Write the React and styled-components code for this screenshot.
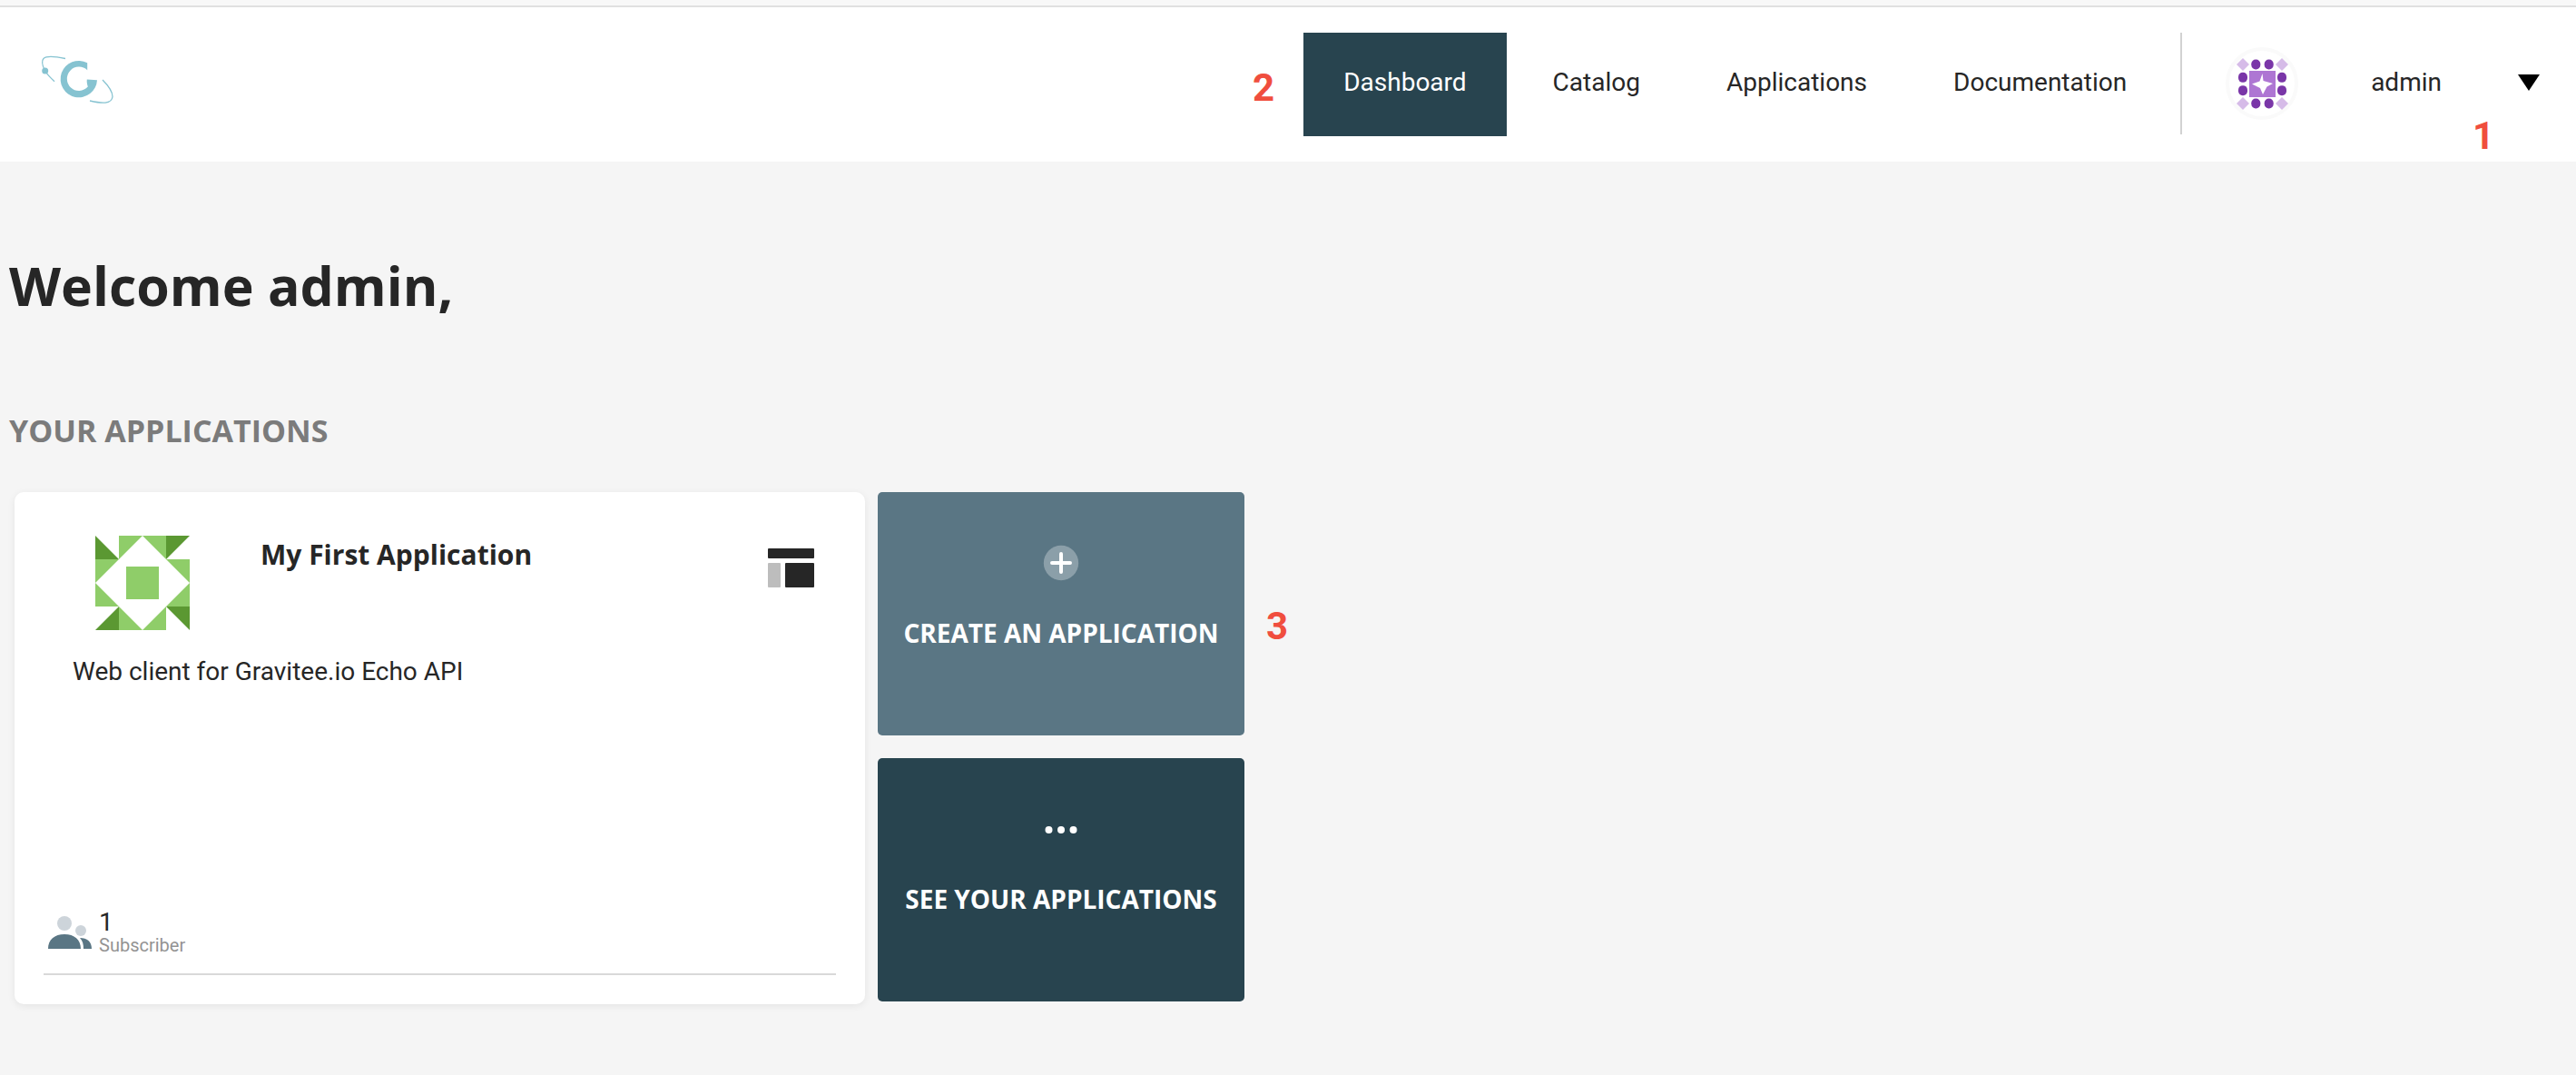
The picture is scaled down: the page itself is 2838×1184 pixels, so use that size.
import React from "react";
import styled, { createGlobalStyle } from "styled-components";

const GlobalStyle = createGlobalStyle`
  *, *::before, *::after { box-sizing: border-box; }
  html, body { margin: 0; background: #f5f5f5; }
  body, button {
    font-family: Roboto, "Noto Sans", sans-serif;
    color: #262626;
  }
  h1, h2, h3, p { margin: 0; }
  svg { display: block; flex: none; }
`;

const headingFont = `"Open Sans", "Noto Sans", sans-serif`;

const Page = styled.div`
  min-height: 100vh;
  background: #f5f5f5;
`;

const TopStrip = styled.div`
  height: 8px;
  background: #f8f8f8;
  border-bottom: 2px solid #e0e0e0;
`;

const Header = styled.header`
  display: flex;
  align-items: center;
  height: 170px;
  padding: 0 40px;
  background: #ffffff;
`;

const LogoLink = styled.a`
  margin: 0 auto 12px 0;
`;

const Marker = styled.span`
  font-size: 42px;
  font-weight: 700;
  line-height: 48px;
  color: #f04e3e;
`;

const NavMarker = styled(Marker)`
  margin: 8px 32px 0 0;
`;

const UserMarker = styled(Marker)`
  position: absolute;
  top: 90px;
  right: 50px;
`;

const TileMarker = styled(Marker)`
  position: absolute;
  top: 124px;
  left: calc(100% + 24px);
`;

const Nav = styled.nav`
  display: flex;
  gap: 7px;
`;

const NavLink = styled.a`
  padding: 39px 44px 43px;
  font-size: 28px;
  line-height: 32px;
  text-decoration: none;
  color: ${(p) => (p.$active ? "#ffffff" : "#262626")};
  background: ${(p) => (p.$active ? "#28444f" : "transparent")};
`;

const UserArea = styled.div`
  position: relative;
  display: flex;
  align-items: center;
  height: 112px;
  margin: 0 0 2px 15px;
  padding-left: 48px;
  border-left: 2px solid #d2d2d2;
`;

const Avatar = styled.span`
  display: grid;
  place-items: center;
  width: 80px;
  height: 80px;
  border: 4px solid #fafafa;
  border-radius: 50%;
`;

const UserButton = styled.button`
  display: flex;
  align-items: center;
  gap: 84px;
  margin-left: 80px;
  padding: 0 0 2px;
  border: 0;
  background: none;
  font-size: 28px;
  line-height: 32px;
`;

const Main = styled.main`
  padding: 98px 10px 76px;
`;

const Title = styled.h1`
  font-family: ${headingFont};
  font-size: 59px;
  font-weight: 700;
  line-height: 76px;
`;

const SectionTitle = styled.h2`
  margin-top: 102px;
  font-family: ${headingFont};
  font-size: 34px;
  font-weight: 700;
  line-height: 40px;
  text-transform: uppercase;
  color: #7b7b7b;
`;

const Applications = styled.section`
  display: flex;
  align-items: flex-start;
  gap: 14px;
  margin-top: 48px;
  padding-left: 6px;
`;

const Card = styled.article`
  display: flex;
  flex-direction: column;
  width: 937px;
  min-height: 564px;
  padding: 48px 32px 32px;
  border-radius: 10px;
  background: #ffffff;
  box-shadow: 0 2px 8px rgba(0, 0, 0, 0.07);
`;

const CardHead = styled.div`
  display: flex;
  align-items: flex-start;
  padding: 0 24px 0 57px;
`;

const CardTitle = styled.h3`
  flex: 1;
  margin: 2px 0 0 78px;
  font-family: ${headingFont};
  font-size: 30px;
  font-weight: 700;
  line-height: 38px;
`;

const IconSlot = styled.span`
  padding-top: 14px;
`;

const Description = styled.p`
  margin: 30px 32px 0;
  font-size: 28px;
  line-height: 32px;
`;

const Stats = styled.div`
  display: flex;
  align-items: center;
  gap: 7px;
  margin-top: auto;
  padding: 0 5px 20px;
  border-bottom: 2px solid #d9d9d9;
`;

const StatText = styled.div`
  display: flex;
  flex-direction: column;
`;

const StatValue = styled.span`
  font-size: 28px;
  line-height: 28px;
`;

const StatLabel = styled.span`
  font-size: 20px;
  line-height: 22px;
  color: #939393;
`;

const Tiles = styled.div`
  display: flex;
  flex-direction: column;
  gap: 25px;
`;

const TileWrap = styled.div`
  position: relative;
`;

const Tile = styled.button`
  display: flex;
  flex-direction: column;
  align-items: center;
  gap: 41px;
  width: 404px;
  height: 268px;
  padding: 58px 12px 0;
  border: 0;
  border-radius: 5px;
  background: ${(p) => (p.$dark ? "#28444f" : "#5a7684")};
  color: #ffffff;
  font-family: ${headingFont};
  font-size: 28px;
  font-weight: 700;
  line-height: 32px;
  text-transform: uppercase;
  white-space: nowrap;
`;

const navItems = ["Dashboard", "Catalog", "Applications", "Documentation"];

const Logo = () => (
  <svg width="90" height="64" viewBox="40 55 90 64" fill="none" aria-hidden="true">
    <path
      d="M96.2 69.2A20.2 20.2 0 1 0 107 88.2L95.8 87.6C95.4 90.5 96 93 96.8 95.6A13.2 13.2 0 1 1 96.2 77.2Z"
      fill="#86c3d1"
    />
    <path
      d="M72 64.5C60 62 51 61.500 48 64.5C45.500 67 46.500 72 49.500 78C52 82 56 86 60 89.700M113 88C120 95 124 102 124 106.500C123 115 112 114 99 111"
      stroke="#86c3d1"
      strokeWidth="1.3"
    />
    <circle cx="49.7" cy="78" r="3.500" fill="#86c3d1" />
  </svg>
);

const diamonds = [[7, 7], [50, 7], [7, 50], [50, 50]];
const dots = [
  [21.300, 7], [35.700, 7], [21.300, 50], [35.700, 50],
  [7, 21.300], [7, 35.700], [50, 21.300], [50, 35.700],
];

const AvatarPattern = () => (
  <svg width="57" height="57" viewBox="0 0 57 57" aria-hidden="true">
    {diamonds.map(([x, y]) => (
      <path key={`${x}-${y}`} d={`M${x} ${y - 7}l7 7l-7 7l-7-7z`} fill="#d6bbe8" />
    ))}
    {dots.map(([x, y]) => (
      <rect key={`${x}-${y}`} x={x - 5} y={y - 5.500} width="10" height="11" rx="4.8" fill="#7a36a8" />
    ))}
    <rect x="14" y="14" width="29" height="29" fill="#ae76d3" />
    <path d="M28.500 17L29.500 25L40 28L33.500 31.500L29 40L26 33L17 28.500L25.500 25.500Z" fill="#fff" />
  </svg>
);

const AppPattern = () => (
  <svg width="104" height="104" viewBox="0 0 104 104" aria-hidden="true">
    <path
      d="M0 0L26 26H0ZM78 0H104L78 26ZM78 78L104 104V78ZM26 78V104H0Z"
      fill="#5b9832"
    />
    <path
      d="M26 0H52L26 26ZM52 0H78V26ZM0 26H26L0 52ZM78 26H104V52ZM0 52L26 78H0ZM104 52V78H78ZM26 78L52 104H26ZM78 78V104H52ZM34 34H70V70H34Z"
      fill="#8fcd69"
    />
  </svg>
);

const LayoutIcon = () => (
  <svg width="51" height="43" viewBox="0 0 51 43" aria-hidden="true">
    <rect width="51" height="11" rx="1" fill="#262626" />
    <rect y="16" width="14" height="27" rx="1" fill="#bdbdbd" />
    <rect x="19" y="16" width="32" height="27" rx="1" fill="#262626" />
  </svg>
);

const PeopleIcon = () => (
  <svg width="49" height="36" viewBox="0 0 49 36" aria-hidden="true">
    <circle cx="18" cy="8" r="8" fill="#cdd4da" />
    <circle cx="36" cy="16" r="6" fill="#cdd4da" />
    <path
      d="M0 36C0 26 7 20 18 20S36 26 36 36ZM35 24C43 24 48 28 48 36H39C39 31 38 27 35 24Z"
      fill="#5a7684"
    />
  </svg>
);

const PlusIcon = () => (
  <svg width="40" height="40" viewBox="0 0 40 40" aria-hidden="true">
    <circle cx="20" cy="20" r="19.200" fill="#fff" fillOpacity="0.3" />
    <path d="M20 10V30M10 20H30" stroke="#fff" strokeWidth="4" strokeLinecap="round" />
  </svg>
);

const DotsIcon = () => (
  <svg width="40" height="40" viewBox="0 0 40 40" fill="#fff" aria-hidden="true">
    <circle cx="6.500" cy="21" r="4" />
    <circle cx="20" cy="21" r="4" />
    <circle cx="33.500" cy="21" r="4" />
  </svg>
);

const CaretIcon = () => (
  <svg width="24" height="18" viewBox="0 0 24 18" aria-hidden="true">
    <path d="M0 0H24L12 18Z" fill="#000" />
  </svg>
);

export default function App() {
  return (
    <Page>
      <GlobalStyle />
      <TopStrip />
      <Header>
        <LogoLink href="#home" aria-label="Home">
          <Logo />
        </LogoLink>
        <NavMarker>2</NavMarker>
        <Nav>
          {navItems.map((item, i) => (
            <NavLink key={item} href={`#${item.toLowerCase()}`} $active={i === 0}>
              {item}
            </NavLink>
          ))}
        </Nav>
        <UserArea>
          <Avatar>
            <AvatarPattern />
          </Avatar>
          <UserButton type="button">
            admin
            <CaretIcon />
          </UserButton>
          <UserMarker>1</UserMarker>
        </UserArea>
      </Header>
      <Main>
        <Title>Welcome admin,</Title>
        <SectionTitle>Your applications</SectionTitle>
        <Applications>
          <Card>
            <CardHead>
              <AppPattern />
              <CardTitle>My First Application</CardTitle>
              <IconSlot>
                <LayoutIcon />
              </IconSlot>
            </CardHead>
            <Description>Web client for Gravitee.io Echo API</Description>
            <Stats>
              <PeopleIcon />
              <StatText>
                <StatValue>1</StatValue>
                <StatLabel>Subscriber</StatLabel>
              </StatText>
            </Stats>
          </Card>
          <Tiles>
            <TileWrap>
              <Tile type="button">
                <PlusIcon />
                Create an application
              </Tile>
              <TileMarker>3</TileMarker>
            </TileWrap>
            <Tile type="button" $dark>
              <DotsIcon />
              See your applications
            </Tile>
          </Tiles>
        </Applications>
      </Main>
    </Page>
  );
}
